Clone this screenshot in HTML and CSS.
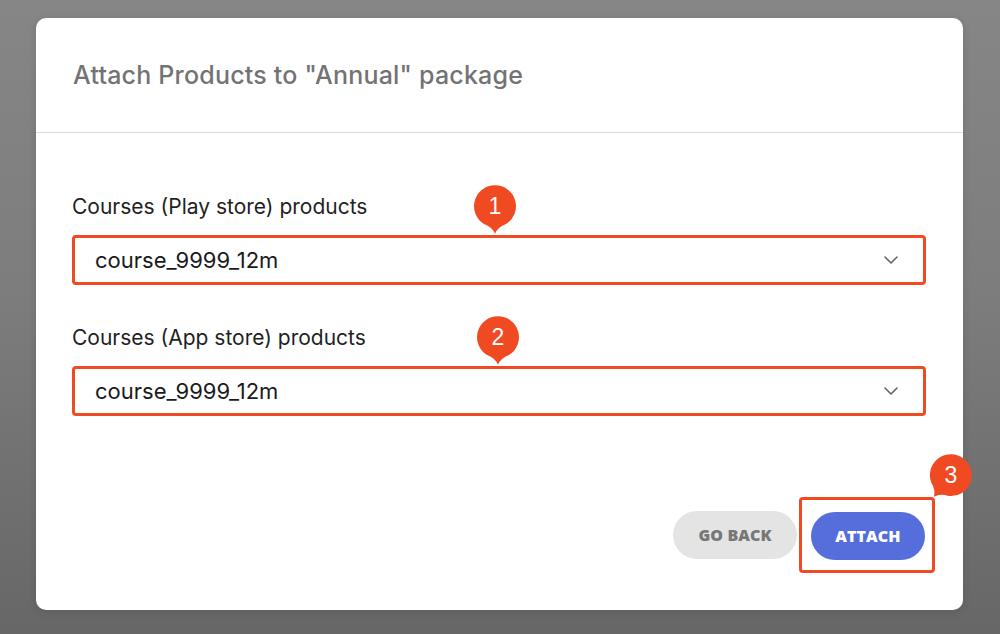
FILE: index.html
```html
<!DOCTYPE html>
<html>
<head>
<meta charset="utf-8">
<link rel="stylesheet" href="styles.css">
</head>
<body>
<div class="modal">
  <div class="modal-header">
    <h1 class="title">Attach Products to "Annual" package</h1>
  </div>
  <div class="modal-body">
    <div class="field">
      <label class="label">Courses (Play store) products</label>
      <div class="select">
        <span class="select-value">course_9999_12m</span>
        <svg class="chevron" width="14" height="8" viewBox="0 0 14 8"><path d="M1 1l6 6 6-6" fill="none" stroke="#666" stroke-width="1.6" stroke-linecap="round" stroke-linejoin="round"/></svg>
      </div>
      <div class="badge badge-1">
        <svg class="pin" width="44" height="51" viewBox="0 0 40 46"><path d="M20 1A19 19 0 0 1 30 36.2Q22.5 39 20 45Q17.5 39 10 36.2A19 19 0 0 1 20 1Z" fill="#f04a23"/></svg>
        <span class="badge-num">1</span>
      </div>
    </div>
    <div class="field">
      <label class="label">Courses (App store) products</label>
      <div class="select">
        <span class="select-value">course_9999_12m</span>
        <svg class="chevron" width="14" height="8" viewBox="0 0 14 8"><path d="M1 1l6 6 6-6" fill="none" stroke="#666" stroke-width="1.6" stroke-linecap="round" stroke-linejoin="round"/></svg>
      </div>
      <div class="badge badge-2">
        <svg class="pin" width="44" height="51" viewBox="0 0 40 46"><path d="M20 1A19 19 0 0 1 30 36.2Q22.5 39 20 45Q17.5 39 10 36.2A19 19 0 0 1 20 1Z" fill="#f04a23"/></svg>
        <span class="badge-num">2</span>
      </div>
    </div>
  </div>
  <div class="modal-footer">
    <button class="btn btn-back">GO BACK</button>
    <div class="highlight">
      <button class="btn btn-attach">ATTACH</button>
      <div class="badge badge-3">
        <svg class="pin pin-rot" width="44" height="51" viewBox="0 0 40 46"><path d="M20 1A19 19 0 0 1 30 36.2Q22.5 39 20 45Q17.5 39 10 36.2A19 19 0 0 1 20 1Z" fill="#f04a23"/></svg>
        <span class="badge-num">3</span>
      </div>
    </div>
  </div>
</div>
</body>
</html>
```

FILE: styles.css
```css
* { box-sizing: border-box; }
html, body { height: 100%; }
body {
  margin: 0;
  width: 1000px;
  height: 634px;
  overflow: hidden;
  background: linear-gradient(180deg, #868686 0%, #7d7d7d 45%, #676767 100%);
  font-family: Inter, "Liberation Sans", sans-serif;
  padding-top: 18px;
}
.modal {
  margin-left: 36px;
  width: 927px;
  height: 592px;
  background: #ffffff;
  border-radius: 10px;
  display: flex;
  flex-direction: column;
  box-shadow: 0 2px 10px rgba(0,0,0,0.12);
}
.modal-header {
  height: 115px;
  border-bottom: 1px solid #dcdcdc;
  padding: 41px 37px 0 37px;
}
.title {
  margin: 0;
  font-size: 25px;
  line-height: 32px;
  font-weight: 500;
  color: #737373;
  letter-spacing: 0.2px;
}
.modal-body {
  padding: 62px 37px 0 36px;
  display: flex;
  flex-direction: column;
  gap: 41px;
}
.field {
  position: relative;
  display: flex;
  flex-direction: column;
}
.label {
  font-size: 21px;
  line-height: 24px;
  color: #1f1f1f;
  margin-bottom: 16px;
}
.select {
  height: 50px;
  border: 3px solid #f04a23;
  border-radius: 4px;
  display: flex;
  align-items: center;
  justify-content: space-between;
  padding: 0 25px 0 20px;
}
.select-value {
  font-size: 22px;
  color: #1a1a1a;
}
.chevron { display: block; }
.badge {
  position: absolute;
  width: 44px;
  height: 51px;
}
.pin { position: absolute; left: 0; top: 0; }
.badge-num {
  position: absolute;
  left: 0;
  top: 0;
  width: 44px;
  height: 44px;
  line-height: 44px;
  text-align: center;
  color: #ffffff;
  font-size: 23px;
  font-family: "Liberation Sans", Inter, sans-serif;
}
.badge-1 { left: 401px; top: -11px; }
.badge-2 { left: 404px; top: -11px; }
.modal-footer {
  margin-top: auto;
  padding: 0 28px 37px 0;
  display: flex;
  justify-content: flex-end;
  align-items: center;
  gap: 2px;
}
.btn {
  border: none;
  border-radius: 24px;
  height: 48px;
  font-family: "Open Sans", Inter, sans-serif;
  font-weight: 800;
  font-size: 16px;
  letter-spacing: 0.1px;
  cursor: pointer;
  padding: 0;
}
.btn-back {
  width: 124px;
  background: #e4e4e4;
  color: #777777;
}
.btn-attach {
  width: 114px;
  background: #566ddc;
  color: #ffffff;
  display: block;
}
.highlight {
  position: relative;
  border: 3px solid #f04a23;
  border-radius: 4px;
  padding: 12px 7px 10px 9px;
}
.badge-3 { left: 127px; top: -47px; }
.pin-rot { transform: rotate(38deg); transform-origin: 22px 22px; }
```
